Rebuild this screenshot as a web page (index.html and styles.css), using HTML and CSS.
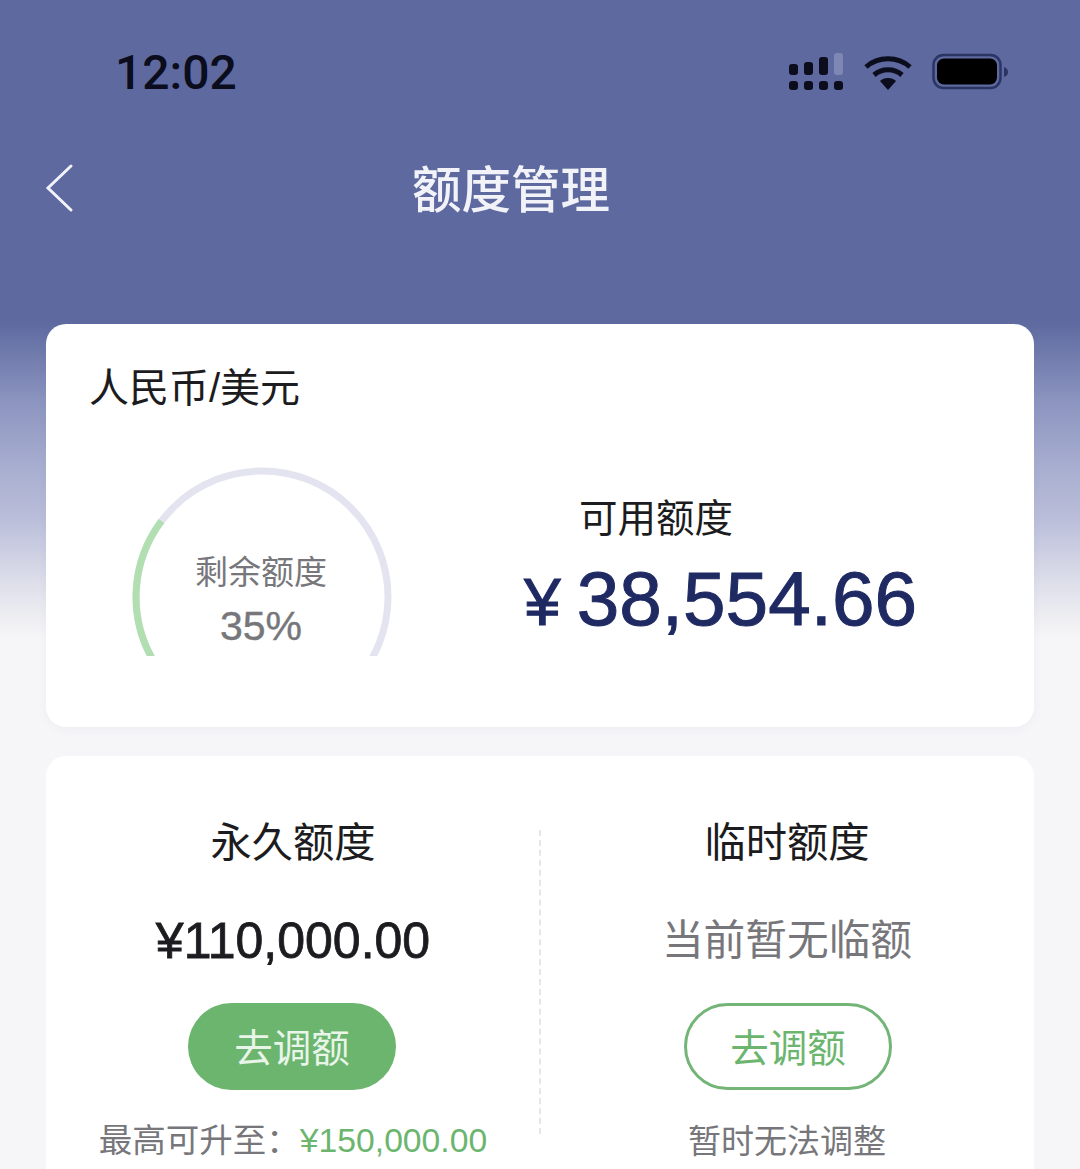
FILE: index.html

```html
<!DOCTYPE html>
<html lang="zh-CN">
<head>
    <meta charset="UTF-8" />
    <meta name="viewport" content="width=device-width, initial-scale=1" />
    <title>额度管理</title>
    <link rel="stylesheet" href="styles.css">
</head>
<body>
    <div class="status-bar">
        <span class="time">12:02</span>
        <div class="status-icons">
            <svg width="56" height="40" viewBox="0 0 56 40" fill="#0b0c1c">
                <rect x="1" y="12" width="9" height="11" rx="3"/>
                <rect x="16" y="10" width="9" height="13" rx="3"/>
                <rect x="31" y="5" width="9" height="18" rx="3"/>
                <rect x="46" y="1" width="9" height="22" rx="3" fill="#7f88b4"/>
                <rect x="1" y="29" width="9" height="9" rx="3"/>
                <rect x="16" y="29" width="9" height="9" rx="3"/>
                <rect x="31" y="29" width="9" height="9" rx="3"/>
                <rect x="46" y="29" width="9" height="9" rx="3"/>
            </svg>
            <svg width="48" height="38" viewBox="0 0 48 38" fill="none" stroke="#0b0c1c" stroke-width="5">
                <path d="M2 14C14 3 34 3 46 14"/>
                <path d="M10 22C18 15 30 15 38 22"/>
                <path d="M16 28L24 37L32 28C28 24 20 24 16 28Z" fill="#0b0c1c" stroke="none"/>
            </svg>
            <svg width="76" height="38" viewBox="0 0 76 38">
                <rect x="1.5" y="2" width="67" height="33" rx="10" fill="none" stroke="#2c3463" stroke-width="2.5"/>
                <rect x="5" y="5.500" width="60" height="26" rx="7" fill="#000"/>
                <path d="M72 14C75 15 76 17 76 19C76 21 75 23 72 24Z" fill="#2c3463"/>
            </svg>
        </div>
    </div>

    <div class="nav">
        <svg class="back" width="30" height="52" viewBox="0 0 30 52" fill="none" stroke="#f2f3f9" stroke-width="3" stroke-linecap="round">
            <path d="M26 3L3 25L26 47"/>
        </svg>
        <h1>额度管理</h1>
    </div>

    <div class="card summary">
        <div class="currency">人民币/美元</div>
        <div class="summary-row">
            <div class="gauge">
                <svg width="270" height="192" viewBox="0 0 270 192" fill="none" stroke-width="7">
                    <circle cx="136" cy="133" r="126" stroke="#e4e4f0"/>
                    <path d="M35.500 57A126 126 0 0 0 27 196" stroke="#b1dfb1"/>
                </svg>
                <div class="gauge-text">
                    <div class="gauge-label">剩余额度</div>
                    <div class="gauge-value">35%</div>
                </div>
            </div>
            <div class="available">
                <div class="available-label">可用额度</div>
                <div class="available-amount"><span class="yen">¥</span>38,554.66</div>
            </div>
        </div>
    </div>

    <div class="card limits">
        <div class="limit">
            <div class="limit-title">永久额度</div>
            <div class="limit-amount">¥110,000.00</div>
            <button class="btn btn-solid">去调额</button>
            <div class="limit-note limit-note-max">最高可升至：<span class="green">¥150,000.00</span></div>
        </div>
        <div class="limit limit-temp">
            <div class="limit-title">临时额度</div>
            <div class="limit-empty">当前暂无临额</div>
            <button class="btn btn-outline">去调额</button>
            <div class="limit-note">暂时无法调整</div>
        </div>
    </div>
</body>
</html>
```

FILE: styles.css

```css
html, body { height: 1169px; overflow: hidden; }
body {
    margin: 0;
    font-family: "Liberation Sans", "Noto Sans CJK SC", sans-serif;
    color: #1c1c20;
    background: linear-gradient(#5d699f 0, #5d699f 320px, #8b94bf 400px, #a8aed0 467px, #b9bdd9 517px, #d5d7e6 567px, #eeeef2 617px, #f6f6f8 640px, #f6f6f8 100%);
}

.status-bar { height: 144px; display: flex; align-items: center; justify-content: space-between; padding: 0 72px 0 115px; }
.time { font-size: 48px; font-weight: 500; font-family: Roboto, sans-serif; color: #0b0c1c; }
.status-icons { display: flex; align-items: center; gap: 20px; }

.nav { height: 84px; position: relative; display: flex; align-items: center; justify-content: center; margin-bottom: 96px; padding-right: 58px; }
.nav h1 { margin: 0; font-size: 49.500px; font-weight: 500; color: #f2f3f9; }
.back { position: absolute; left: 45px; top: 19px; }

.card { background: #fff; border-radius: 20px; margin: 0 46px; }
.summary { height: 403px; padding: 39px 43px 0; box-sizing: border-box; box-shadow: 0 2px 8px rgba(90, 100, 150, 0.06); margin-bottom: 29px; }
.currency { font-size: 40px; line-height: 50px; }
.summary-row { display: flex; margin-top: 51px; }

.gauge { position: relative; width: 270px; height: 192px; margin-left: 37px; }
.gauge svg { display: block; }
.gauge-text { position: absolute; left: 0; right: 0; top: 86px; text-align: center; color: #77777b; }
.gauge-label { font-size: 33px; line-height: 46px; }
.gauge-value { font-size: 41px; line-height: 46px; margin-top: 7px; -webkit-text-stroke: 0.4px #77777b; }

.available { margin-left: 128px; margin-top: 28px; }
.available-label { font-size: 38.500px; line-height: 54px; padding-left: 55px; }
.available-amount { font-size: 76.500px; line-height: 90px; color: #1f2a63; -webkit-text-stroke: 1px #1f2a63; white-space: nowrap; margin-top: 8px; }
.yen { font-size: 66px; margin-right: 16px; }

.limits { display: flex; height: 500px; position: relative; }
.limits::before { content: ""; position: absolute; left: 493px; top: 74px; height: 304px; border-left: 2px dashed #e6e6e8; }
.limit { flex: 1; display: flex; flex-direction: column; align-items: center; padding-top: 58px; }
.limit-title { font-size: 41.300px; line-height: 58px; }
.limit-amount { font-size: 50px; line-height: 70px; margin-top: 34px; -webkit-text-stroke: 0.8px #1c1c20; }
.limit-empty { font-size: 41.700px; line-height: 70px; margin-top: 34px; color: #77777b; }
.btn { width: 208px; height: 87px; margin-top: 27px; border-radius: 44px; font: inherit; font-size: 38.500px; box-sizing: border-box; padding: 0 0 4px; }
.btn-solid { background: #6bb56f; border: none; color: #e9f5e9; margin-left: -2px; }
.btn-outline { background: #fff; border: 3px solid #73b477; color: #6bb56f; margin-left: 2px; }
.limit-note { font-size: 33px; line-height: 46px; margin-top: 29px; color: #77777b; white-space: nowrap; }
.limit-note-max { font-size: 33.500px; margin-top: 27px; }
.green { color: #6bb56f; font-size: 33.700px; }
```
